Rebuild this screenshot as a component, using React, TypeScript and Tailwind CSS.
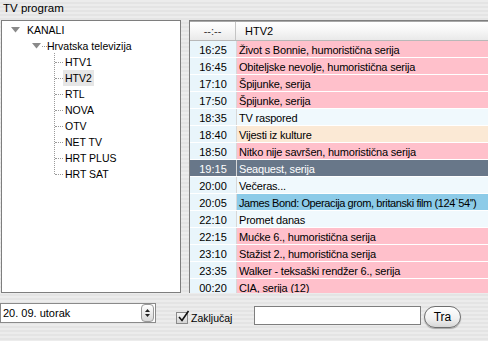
import React from "react";

type Row = { t: string; title: string; kind: "pink" | "blue" | "peach" | "sel" | "sky" };

const rows: Row[] = [
  { t: "16:25", title: "Život s Bonnie, humoristična serija", kind: "pink" },
  { t: "16:45", title: "Obiteljske nevolje, humoristična serija", kind: "pink" },
  { t: "17:10", title: "Špijunke, serija", kind: "pink" },
  { t: "17:50", title: "Špijunke, serija", kind: "pink" },
  { t: "18:35", title: "TV raspored", kind: "blue" },
  { t: "18:40", title: "Vijesti iz kulture", kind: "peach" },
  { t: "18:50", title: "Nitko nije savršen, humoristična serija", kind: "pink" },
  { t: "19:15", title: "Seaquest, serija", kind: "sel" },
  { t: "20:00", title: "Večeras...", kind: "blue" },
  { t: "20:05", title: "James Bond: Operacija grom, britanski film (124`54'')", kind: "sky" },
  { t: "22:10", title: "Promet danas", kind: "blue" },
  { t: "22:15", title: "Mućke 6., humoristična serija", kind: "pink" },
  { t: "23:10", title: "Stažist 2., humoristična serija", kind: "pink" },
  { t: "23:35", title: "Walker - teksaški rendžer 6., serija", kind: "pink" },
  { t: "00:20", title: "CIA, serija (12)", kind: "pink" },
];

const titleCls: Record<Row["kind"], string> = {
  pink: "bg-[#ffc0cb] text-black tracking-[-0.2px]",
  blue: "bg-[#f0f9fd] text-black tracking-[-0.2px]",
  peach: "bg-[#fbe9d5] text-black tracking-[-0.2px]",
  sel: "bg-[#687789] text-white tracking-[-0.2px]",
  sky: "bg-[#8ccbe8] text-black tracking-[-0.4px]",
};

const channels = ["HTV1", "HTV2", "RTL", "NOVA", "OTV", "NET TV", "HRT PLUS", "HRT SAT"];

function Tri() {
  return (
    <svg width="9" height="6" viewBox="0 0 9 6" className="shrink-0">
      <polygon points="0,0 9,0 4.5,5.5" fill="#8a8a8a" />
    </svg>
  );
}

export default function App() {
  return (
    <div
      className="w-[488px] h-[341px] overflow-hidden flex flex-col text-[11px] leading-none text-black bg-[repeating-linear-gradient(180deg,#ececec_0px,#ececec_2px,#e4e4e4_2px,#e4e4e4_4px)]"
      style={{ fontFamily: '"Liberation Sans", Arial, sans-serif' }}
    >
      <div className="h-[20px] pl-[3px] pt-[3px] shrink-0 text-[11.5px]">TV program</div>
      <div className="flex h-[273px] shrink-0">
        {/* Tree */}
        <div className="ml-[1px] w-[180px] h-full bg-white border border-[#7e7e7e] pt-[1px] text-[10.5px]">
          <div className="h-[16px] flex items-center pl-[9px]">
            <Tri />
            <span className="ml-[7px]">KANALI</span>
          </div>
          <div className="h-[16px] flex items-center pl-[30px]">
            <Tri />
            <span className="w-[5px] border-t border-dotted border-[#9a9a9a] ml-[1px]" />
            <span>Hrvatska televizija</span>
          </div>
          <div className="ml-[52px] border-l border-dotted border-[#9a9a9a] h-[121px] mt-[-1px] pt-[1px]">
            {channels.map((c) => (
              <div key={c} className="h-[16px] flex items-center">
                <span className="w-[8px] border-t border-dotted border-[#9a9a9a]" />
                <span
                  className={
                    "h-[16px] flex items-center px-[2px] " + (c === "HTV2" ? "bg-[#e6e6e6]" : "")
                  }
                >
                  {c}
                </span>
              </div>
            ))}
          </div>
        </div>
        {/* Table */}
        <div className="ml-[8px] flex-1 h-full border-l border-t border-[#7e7e7e] bg-white overflow-hidden flex flex-col">
          <div className="h-[20px] shrink-0 flex border-t border-[#a8a8a8] border-b border-b-[#b8b8b8] bg-[linear-gradient(180deg,#ffffff,#f6f6f6_50%,#e9e9e9)]">
            <div className="w-[46px] flex items-center justify-center border-r border-[#c4c4c4] text-[#333] pt-[1px]">
              --:--
            </div>
            <div className="flex-1 flex items-center pl-[9px] pt-[1px]">HTV2</div>
          </div>
          {rows.map((r, i) => (
            <div key={i} className="h-[17px] shrink-0 flex border-b border-white">
              <div
                className={
                  "w-[46px] flex items-center justify-center pt-[2px] " +
                  (r.kind === "sel" ? "bg-[#687789] text-white" : "bg-[#e9f5fb]")
                }
              >
                {r.t}
              </div>
              <div
                className={
                  "flex-1 flex items-center pl-[2px] pt-[2px] whitespace-nowrap overflow-hidden border-l border-[#d8d8d8] " +
                  titleCls[r.kind]
                }
              >
                {r.title}
              </div>
            </div>
          ))}
        </div>
      </div>
      {/* Bottom */}
      <div className="flex items-start pt-[10px]">
        <div className="w-[156px] h-[20px] bg-white border border-[#8a8a8a] flex items-center">
          <span className="flex-1 pl-[2px]">20. 09. utorak</span>
          <div className="w-[13px] h-[18px] mr-[1px] rounded-[4px] border border-[#9a9a9a] bg-[linear-gradient(180deg,#ffffff,#d8d8d8)] flex flex-col items-center justify-center gap-[2px]">
            <svg width="5" height="3" viewBox="0 0 5 3">
              <polygon points="0,3 5,3 2.5,0" fill="#222" />
            </svg>
            <svg width="5" height="3" viewBox="0 0 5 3">
              <polygon points="0,0 5,0 2.5,3" fill="#222" />
            </svg>
          </div>
        </div>
        <div className="ml-[20px] w-[78px] mt-[9px] flex items-center shrink-0">
          <div className="w-[12px] h-[12px] border border-[#8a8a8a] bg-[linear-gradient(180deg,#f4f4f4,#d4d4d4)] relative shrink-0">
            <svg width="13" height="13" viewBox="0 0 13 13" className="absolute left-[0px] top-[-3px]">
              <path d="M2 7 L5 10.5 L11.5 1" stroke="#111" strokeWidth="1.6" fill="none" />
            </svg>
          </div>
          <span className="ml-[3px] text-[10.5px]">Zaključaj</span>
        </div>
        <div className="mt-[3px] w-[167px] h-[19px] bg-white border border-[#7e7e7e] shrink-0" />
        <div className="ml-[3px] mt-[3px] w-[37px] h-[22px] rounded-full border border-[#6e6e6e] bg-[linear-gradient(180deg,#ffffff,#f0f0f0_60%,#d6d6d6)] shadow-[0_1px_1px_rgba(0,0,0,0.3)] flex items-center justify-center text-[12px] shrink-0">
          Tra
        </div>
      </div>
    </div>
  );
}
